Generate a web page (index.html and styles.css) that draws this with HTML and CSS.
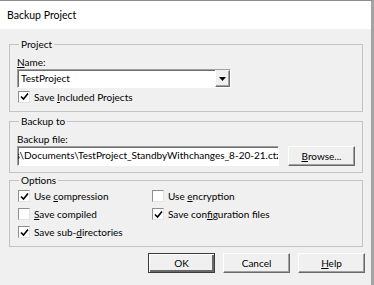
FILE: index.html
```html
<!DOCTYPE html>
<html lang="en">
<head>
  <meta charset="UTF-8">
  <title>Backup Project</title>
  <link rel="stylesheet" href="styles.css">
</head>
<body>
  <div class="dialog">
    <div class="titlebar">Backup Project</div>
    <div class="content">
      <fieldset class="group">
        <legend>Project</legend>
        <div class="label"><u>N</u>ame:</div>
        <div class="combo">
          <span class="combo-text">TestProject</span>
          <span class="combo-btn">
            <svg width="7" height="4" viewBox="0 0 7 4"><path d="M0 0h7L3.5 4z" fill="#000"/></svg>
          </span>
        </div>
        <label class="check first">
          <span class="box"><svg width="9" height="9" viewBox="0 0 9 9"><path d="M1 4.5l2.5 2.5L8 1.5" fill="none" stroke="#000" stroke-width="1.6"/></svg></span>
          <span>Save <u>I</u>ncluded Projects</span>
        </label>
      </fieldset>

      <fieldset class="group">
        <legend>Backup to</legend>
        <div class="label">Backup file:</div>
        <div class="file-row">
          <div class="edit"><span class="edit-text">s\Documents\TestProject_StandbyWithchanges_8-20-21.ctz</span></div>
          <button class="btn browse"><u>B</u>rowse...</button>
        </div>
      </fieldset>

      <fieldset class="group">
        <legend>Options</legend>
        <div class="options">
          <label class="check">
            <span class="box"><svg width="9" height="9" viewBox="0 0 9 9"><path d="M1 4.5l2.5 2.5L8 1.5" fill="none" stroke="#000" stroke-width="1.6"/></svg></span>
            <span>Use <u>c</u>ompression</span>
          </label>
          <label class="check">
            <span class="box"></span>
            <span>Use <u>e</u>ncryption</span>
          </label>
          <label class="check">
            <span class="box"></span>
            <span><u>S</u>ave compiled</span>
          </label>
          <label class="check">
            <span class="box"><svg width="9" height="9" viewBox="0 0 9 9"><path d="M1 4.5l2.5 2.5L8 1.5" fill="none" stroke="#000" stroke-width="1.6"/></svg></span>
            <span>Save con<u>f</u>iguration files</span>
          </label>
          <label class="check">
            <span class="box"><svg width="9" height="9" viewBox="0 0 9 9"><path d="M1 4.5l2.5 2.5L8 1.5" fill="none" stroke="#000" stroke-width="1.6"/></svg></span>
            <span>Save sub-<u>d</u>irectories</span>
          </label>
        </div>
      </fieldset>

      <div class="buttons">
        <button class="btn default">OK</button>
        <button class="btn">Cancel</button>
        <button class="btn"><u>H</u>elp</button>
      </div>
    </div>
  </div>
</body>
</html>
```

FILE: styles.css
```css
* {
  box-sizing: border-box;
}
body {
  margin: 0;
  background: #f0f0f0;
  font-family: Lato, "Liberation Sans", sans-serif;
  font-size: 10px;
  color: #000;
}
.dialog {
  width: 374px;
  height: 285px;
  border-top: 1px solid #8c8c8c;
  border-right: 3px solid #a3a3a3;
  background: #f0f0f0;
}
.titlebar {
  height: 28px;
  line-height: 28px;
  padding-left: 7px;
  background: #fff;
  font-size: 10.5px;
}
.content {
  padding: 0 8px 0 9px;
}
.group {
  margin: 3px 0 0;
  border: 1px solid #c3c3c3;
  padding: 6px 7px 6px;
}
.group:first-child {
  margin-top: 9px;
}
.group:nth-child(3) {
  margin-top: 1px;
  padding-top: 0;
  padding-bottom: 5px;
}
legend {
  padding: 0 2px;
  margin-left: 2px;
  line-height: 12px;
}
.label {
  line-height: 12px;
}
.combo {
  display: flex;
  width: 214px;
  height: 19px;
  margin-top: 1px;
  background: #fff;
  border: 1px solid;
  border-color: #a0a0a0 #fff #fff #a0a0a0;
  box-shadow: inset 1px 1px 0 #6d6d6d;
}
.combo-text {
  flex: 1;
  padding: 1px 0 0 3px;
  line-height: 15px;
}
.combo-btn {
  width: 15px;
  display: flex;
  align-items: center;
  justify-content: center;
  background: #f0f0f0;
  border: 1px solid;
  border-color: #f0f0f0 #6d6d6d #6d6d6d #fff;
  box-shadow: inset -1px -1px 0 #a0a0a0;
}
.check {
  display: flex;
  align-items: center;
  gap: 4px;
  height: 18px;
}
.check.first {
  height: 17px;
}
.box {
  width: 12px;
  height: 12px;
  margin-left: 1px;
  background: #fff;
  border: 1px solid;
  border-color: #8e8e8e #e3e3e3 #e3e3e3 #8e8e8e;
  display: flex;
  align-items: center;
  justify-content: center;
}
.file-row {
  display: flex;
  align-items: center;
  height: 21px;
}
.edit {
  width: 262px;
  height: 20px;
  margin-top: 1px;
  overflow: hidden;
  white-space: nowrap;
  background: #fff;
  border: 1px solid;
  border-color: #a0a0a0 #fff #fff #a0a0a0;
  box-shadow: inset 1px 1px 0 #6d6d6d;
  line-height: 17px;
}
.edit-text {
  display: inline-block;
  margin-left: -2.5px;
}
.btn {
  font: inherit;
  color: #000;
  height: 20px;
  padding: 0;
  background: #f0f0f0;
  border: 1px solid;
  border-color: #fff #696969 #696969 #fff;
  box-shadow: inset -1px -1px 0 #a0a0a0;
}
.browse {
  width: 67px;
  margin-left: 9px;
}
.options {
  display: grid;
  grid-template-columns: 134px 1fr;
  margin-top: 1px;
}
.buttons {
  display: flex;
  justify-content: flex-end;
  gap: 8px;
  margin: 6px -2px 0 0;
}
.buttons .btn {
  width: 67px;
}
.btn.default {
  border-color: #3c3c3c;
  box-shadow: inset 1px 1px 0 #fff, inset -2px -2px 0 #696969;
}
```
